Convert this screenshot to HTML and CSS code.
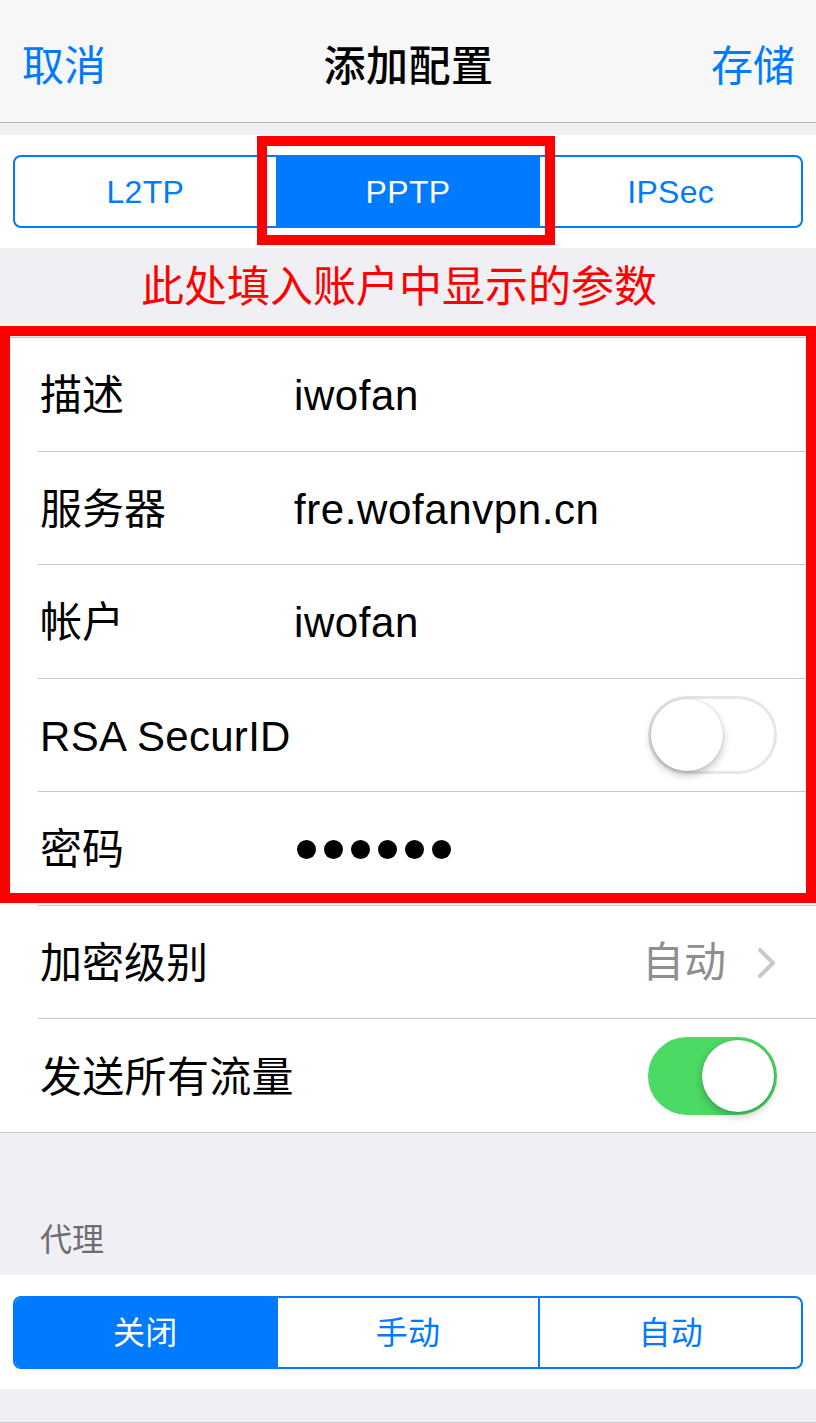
FILE: index.html
```html
<!DOCTYPE html>
<html lang="zh-CN">
<head>
<meta charset="utf-8">
<title>添加配置</title>
<link rel="stylesheet" href="styles.css">
</head>
<body>
<header class="nav">
  <span class="nav-btn left">取消</span>
  <span class="nav-title">添加配置</span>
  <span class="nav-btn right">存储</span>
</header>
<div class="spacer-top"></div>
<section class="seg-section">
  <div class="seg">
    <div class="seg-item">L2TP</div>
    <div class="seg-item selected">PPTP</div>
    <div class="seg-item">IPSec</div>
  </div>
</section>
<div class="note">此处填入账户中显示的参数</div>
<section class="group">
  <div class="row"><span class="label">描述</span><span class="value">iwofan</span></div>
  <div class="row"><span class="label">服务器</span><span class="value">fre.wofanvpn.cn</span></div>
  <div class="row"><span class="label">帐户</span><span class="value">iwofan</span></div>
  <div class="row"><span class="label wide">RSA SecurID</span><span class="value"></span><span class="switch"><span class="knob"></span></span></div>
  <div class="row"><span class="label">密码</span><span class="value dots"><i></i><i></i><i></i><i></i><i></i><i></i></span></div>
  <div class="row"><span class="label">加密级别</span><span class="value"></span><span class="detail">自动<svg class="chev" width="20" height="32" viewBox="0 0 20 32"><path d="M3 3 L16 16 L3 29" fill="none" stroke="#c7c7cc" stroke-width="4" stroke-linecap="round" stroke-linejoin="round"/></svg></span></div>
  <div class="row last"><span class="label wide">发送所有流量</span><span class="value"></span><span class="switch on"><span class="knob"></span></span></div>
</section>
<div class="section-header">代理</div>
<section class="seg-section bottom">
  <div class="seg">
    <div class="seg-item selected">关闭</div>
    <div class="seg-item">手动</div>
    <div class="seg-item">自动</div>
  </div>
</section>
<div class="footer-gap"></div>
<div class="mark mark-seg"></div>
<div class="mark mark-group"></div>
</body>
</html>
```
FILE: styles.css
```css
* { box-sizing: border-box; }
html, body { margin: 0; padding: 0; }
body {
  width: 816px;
  height: 1423px;
  overflow: hidden;
  background: #efeff4;
  font-family: "Liberation Sans", "Noto Sans CJK SC", sans-serif;
  color: #000;
  position: relative;
}
.nav {
  height: 123px;
  background: #f7f7f8;
  border-bottom: 1px solid #b2b2b2;
  display: grid;
  grid-template-columns: 1fr auto 1fr;
  align-items: center;
  padding: 12px 21px 0 22px;
}
.nav-btn { color: #007aff; font-size: 42px; line-height: 1; }
.nav-btn.right { justify-self: end; }
.nav-title { font-size: 42px; font-weight: 500; line-height: 1; letter-spacing: 0.5px; }
.spacer-top { height: 12px; }
.seg-section {
  background: #fff;
  height: 113px;
  padding: 20px 13px 0;
}
.seg-section.bottom { height: 114px; padding-top: 21px; }
.seg {
  display: flex;
  height: 73px;
  border: 2px solid #007aff;
  border-radius: 8px;
  overflow: hidden;
}
.seg-item {
  flex: 1;
  display: flex;
  align-items: center;
  justify-content: center;
  color: #007aff;
  font-size: 32px;
  line-height: 1;
  letter-spacing: 0.3px;
  border-left: 2px solid #007aff;
}
.seg-item:first-child { border-left: none; }
.seg-item.selected { background: #007aff; color: #fff; }
.note {
  height: 89px;
  color: #ff0000;
  font-size: 43px;
  line-height: 1;
  display: flex;
  justify-content: center;
  padding: 18px 18px 0 0;
}
.group {
  background: #fff;
  border-top: 1px solid #c8c7cc;
  border-bottom: 1px solid #c8c7cc;
}
.row {
  height: 113.5px;
  margin-left: 38px;
  padding: 0 39px 0 2px;
  border-bottom: 1px solid #c8c7cc;
  display: grid;
  grid-template-columns: 254px 1fr auto;
  align-items: center;
  font-size: 42px;
  line-height: 1;
}
.row.last { border-bottom: none; height: 113px; }
.label { white-space: nowrap; padding-top: 4px; }
.label.wide { letter-spacing: 0.3px; }
.value { letter-spacing: 0.6px; padding-top: 4px; }
.dots { display: flex; gap: 8px; padding-left: 3px; padding-top: 2px; }
.dots i { width: 19px; height: 19px; border-radius: 50%; background: #000; display: block; }
.detail {
  display: flex;
  align-items: center;
  gap: 31px;
  color: #8e8e93;
  padding-top: 2px;
}
.chev { display: block; }
.switch {
  width: 129px;
  height: 78px;
  border-radius: 39px;
  border: 3px solid #e5e5ea;
  background: #fff;
  display: flex;
  align-items: center;
  justify-content: flex-start;
}
.switch.on { background: #4cd964; border-color: #4cd964; justify-content: flex-end; }
.knob {
  width: 72px;
  height: 72px;
  border-radius: 50%;
  background: #fff;
  box-shadow: 0 4px 8px rgba(0,0,0,0.25), 0 0 0 1px rgba(0,0,0,0.06);
}
.section-header {
  height: 142px;
  display: flex;
  align-items: flex-end;
  padding: 0 0 19px 40px;
  color: #6d6d72;
  font-size: 32px;
  line-height: 1;
}
.footer-gap {
  height: 34px;
  border-bottom: 1px solid #c8c7cc;
}
.mark {
  position: absolute;
  border: 10px solid #ff0000;
}
.mark-seg { left: 257px; top: 136px; width: 298px; height: 109px; }
.mark-group { left: 0; top: 326px; width: 816px; height: 577px; }
```
